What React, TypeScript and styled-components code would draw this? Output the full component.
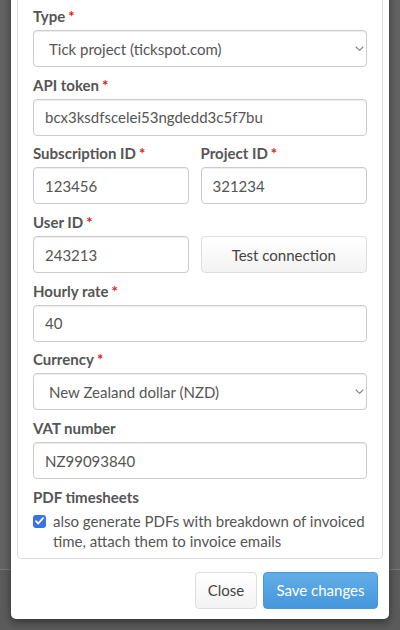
import React from "react";
import styled, { createGlobalStyle } from "styled-components";

const Global = createGlobalStyle`
  html, body { margin: 0; padding: 0; }
  body {
    width: 400px;
    height: 630px;
    overflow: hidden;
    font-family: "Lato", "Open Sans", sans-serif;
    background: linear-gradient(to bottom, #636363 0, #636363 569px, #7a7a7a 569px, #7a7a7a 570px, #5b5b5b 570px);
  }
`;

const Backdrop = styled.div`
  width: 400px;
  height: 630px;
  overflow: hidden;
`;

const Modal = styled.div`
  margin: -17px 11px 0;
  background: #fff;
  border-radius: 0 0 5px 5px;
  box-shadow: 0 3px 9px rgba(0, 0, 0, 0.45);
  padding: 6px 6px 0;
`;

const Panel = styled.div`
  border: 1px solid #ddd;
  border-radius: 4px;
  padding: 16px 15px 7px;
`;

const Group = styled.div<{ $last?: boolean }>`
  margin-bottom: ${(p) => (p.$last ? "0" : "7.7px")};
`;

const Row = styled.div`
  display: grid;
  grid-template-columns: 156px 1fr;
  column-gap: 11.5px;
`;

const Label = styled.div`
  font-size: 15px;
  font-weight: 700;
  color: #555;
  line-height: 20px;
  height: 20px;
  margin-bottom: 4px;
  white-space: nowrap;
`;

const Req = styled.span`
  color: #e01b1b;
  margin-left: 3px;
  font-weight: 700;
`;

const Field = styled.div`
  box-sizing: border-box;
  height: 37px;
  border: 1px solid #ccc;
  border-radius: 4px;
  box-shadow: inset 0 1px 1px rgba(0, 0, 0, 0.075);
  background: #fff;
  color: #555;
  font-size: 15px;
  display: flex;
  align-items: center;
  padding: 0 11px;
  white-space: nowrap;
`;

const SelectField = styled(Field)`
  padding: 0 2px 0 15px;
  justify-content: space-between;
`;

const Chevron = styled.svg`
  width: 9px;
  height: 5px;
  flex: none;
`;

const Button = styled.div<{ $primary?: boolean }>`
  box-sizing: border-box;
  height: 37px;
  border-radius: 4px;
  display: flex;
  align-items: center;
  justify-content: center;
  font-size: 15px;
  white-space: nowrap;
  border: 1px solid ${(p) => (p.$primary ? "#4a97dc" : "#ddd")};
  color: ${(p) => (p.$primary ? "#fff" : "#444")};
  background: ${(p) =>
    p.$primary
      ? "linear-gradient(to bottom, #62ade8 0%, #4597dc 100%)"
      : "linear-gradient(to bottom, #fff 0%, #f3f3f3 100%)"};
`;

const CheckRow = styled.div`
  display: flex;
  align-items: flex-start;
  gap: 7px;
`;

const Box = styled.div`
  flex: none;
  width: 13px;
  height: 13px;
  margin-top: 4px;
  border-radius: 3px;
  background: #3a73e8;
  display: flex;
  align-items: center;
  justify-content: center;
`;

const CheckText = styled.div`
  font-size: 15px;
  line-height: 20px;
  color: #555;
`;

const Footer = styled.div`
  display: flex;
  justify-content: flex-end;
  gap: 6px;
  padding: 13px 5px 10px 0;
`;

const CloseBtn = styled(Button)`
  width: 62px;
`;

const SaveBtn = styled(Button)`
  width: 115px;
`;

const Select = ({ children }: { children: React.ReactNode }) => (
  <SelectField>
    <span>{children}</span>
    <Chevron viewBox="0 0 9 5">
      <path d="M0.7 0.7l3.8 3.6 3.8-3.6" fill="none" stroke="#777" strokeWidth="1.1" />
    </Chevron>
  </SelectField>
);

export default function App() {
  return (
    <>
      <Global />
      <Backdrop>
        <Modal>
          <Panel>
            <Group>
              <Label>
                Type<Req>*</Req>
              </Label>
              <Select>Tick project (tickspot.com)</Select>
            </Group>
            <Group>
              <Label>
                API token<Req>*</Req>
              </Label>
              <Field>bcx3ksdfscelei53ngdedd3c5f7bu</Field>
            </Group>
            <Row>
              <Group>
                <Label>
                  Subscription ID<Req>*</Req>
                </Label>
                <Field>123456</Field>
              </Group>
              <Group>
                <Label>
                  Project ID<Req>*</Req>
                </Label>
                <Field>321234</Field>
              </Group>
            </Row>
            <Row>
              <Group>
                <Label>
                  User ID<Req>*</Req>
                </Label>
                <Field>243213</Field>
              </Group>
              <Group>
                <Label />
                <Button>Test connection</Button>
              </Group>
            </Row>
            <Group>
              <Label>
                Hourly rate<Req>*</Req>
              </Label>
              <Field>40</Field>
            </Group>
            <Group>
              <Label>
                Currency<Req>*</Req>
              </Label>
              <Select>New Zealand dollar (NZD)</Select>
            </Group>
            <Group>
              <Label>VAT number</Label>
              <Field>NZ99093840</Field>
            </Group>
            <Group $last>
              <Label>PDF timesheets</Label>
              <CheckRow>
                <Box>
                  <svg width="9" height="8" viewBox="0 0 9 8">
                    <path d="M1 4.2l2.3 2.3L8 1.2" fill="none" stroke="#fff" strokeWidth="1.8" strokeLinecap="round" strokeLinejoin="round" />
                  </svg>
                </Box>
                <CheckText>
                  also generate PDFs with breakdown of invoiced time, attach them to invoice emails
                </CheckText>
              </CheckRow>
            </Group>
          </Panel>
          <Footer>
            <CloseBtn>Close</CloseBtn>
            <SaveBtn $primary>Save changes</SaveBtn>
          </Footer>
        </Modal>
      </Backdrop>
    </>
  );
}
